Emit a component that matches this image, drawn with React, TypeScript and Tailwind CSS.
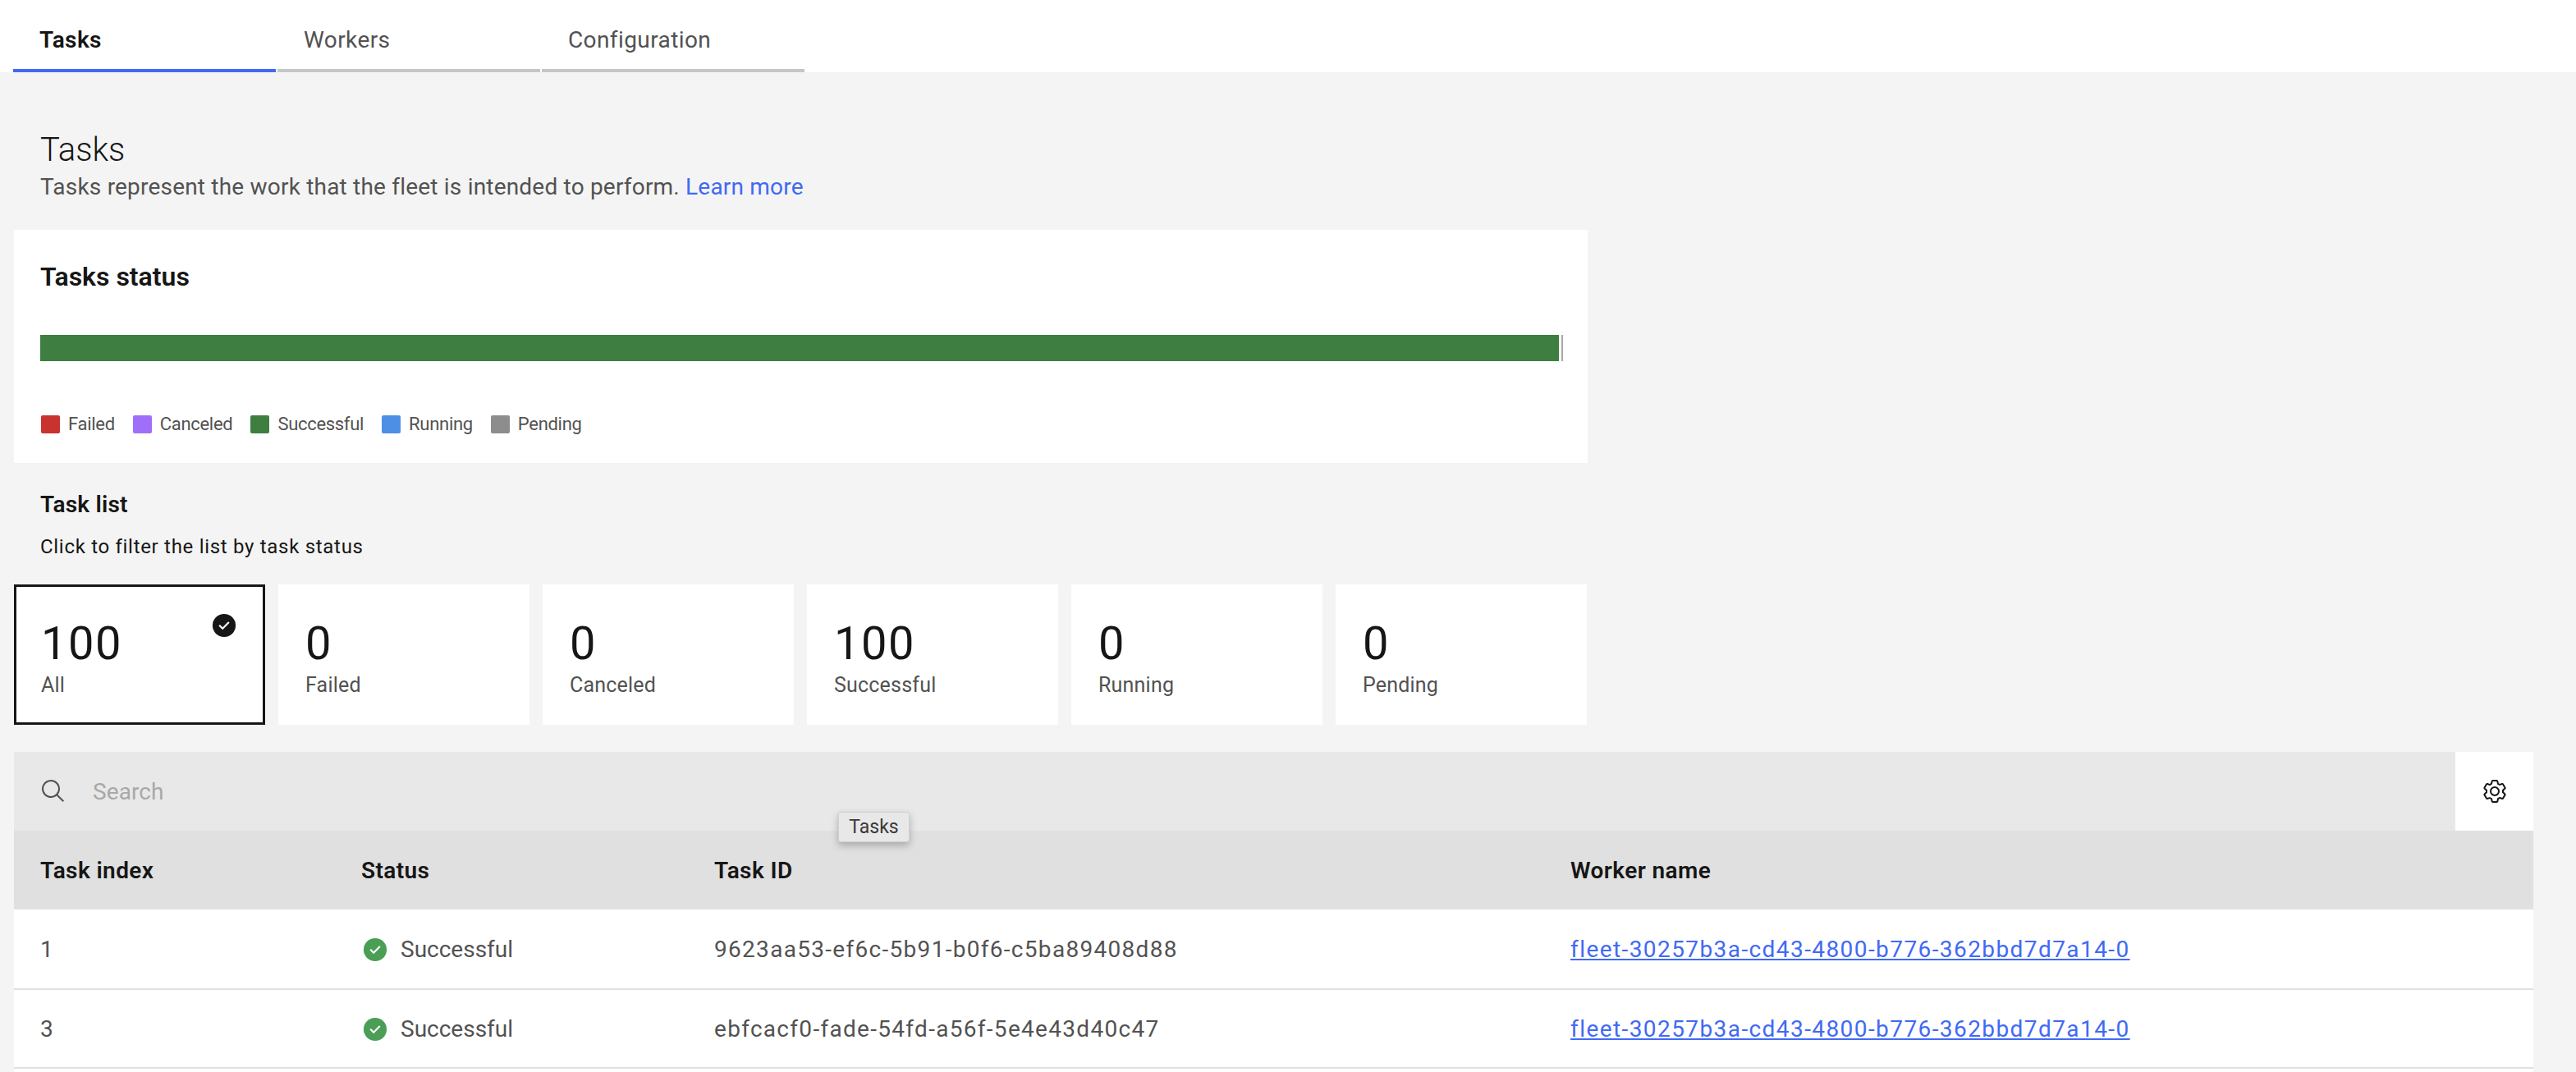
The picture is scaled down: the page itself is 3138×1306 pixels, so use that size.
import React from 'react';

const tabs = [
  { label: 'Tasks', active: true },
  { label: 'Workers', active: false },
  { label: 'Configuration', active: false },
];

const legend = [
  { label: 'Failed', swatch: 'bg-[#c8322f]' },
  { label: 'Canceled', swatch: 'bg-[#a06ffa]' },
  { label: 'Successful', swatch: 'bg-[#3e7e41]' },
  { label: 'Running', swatch: 'bg-[#4e8fe6]' },
  { label: 'Pending', swatch: 'bg-[#8d8d8d]' },
];

const tiles = [
  { count: 100, label: 'All', selected: true },
  { count: 0, label: 'Failed', selected: false },
  { count: 0, label: 'Canceled', selected: false },
  { count: 100, label: 'Successful', selected: false },
  { count: 0, label: 'Running', selected: false },
  { count: 0, label: 'Pending', selected: false },
];

const rows = [
  { index: 1, id: '9623aa53-ef6c-5b91-b0f6-c5ba89408d88' },
  { index: 3, id: 'ebfcacf0-fade-54fd-a56f-5e4e43d40c47' },
];

const workerName = 'fleet-30257b3a-cd43-4800-b776-362bbd7d7a14-0';

function CheckCircle({ color, className }: { color: string; className: string }) {
  return (
    <svg viewBox="0 0 32 32" className={className}>
      <circle cx="16" cy="16" r="15" fill={color} />
      <path d="M14 21.6l-5-5L10.6 15l3.4 3.4L21.4 11l1.6 1.6z" fill="#fff" />
    </svg>
  );
}

function SearchIcon() {
  return (
    <svg viewBox="0 0 32 32" className="w-[32px] h-[32px]" fill="#525252">
      <path d="M29 27.586l-7.552-7.552a11.018 11.018 0 1 0-1.414 1.414L27.586 29zM4 13a9 9 0 1 1 9 9 9.01 9.01 0 0 1-9-9z" />
    </svg>
  );
}

function GearIcon() {
  return (
    <svg viewBox="0 0 32 32" className="w-[32px] h-[32px]" fill="#161616">
      <path d="M27,16.76c0-.25,0-.5,0-.76s0-.51,0-.77l1.92-1.68A2,2,0,0,0,29.3,11L26.94,7a2,2,0,0,0-1.73-1,2,2,0,0,0-.64.1l-2.43.82a11.35,11.35,0,0,0-1.31-.75l-.51-2.52a2,2,0,0,0-2-1.61H13.64a2,2,0,0,0-2,1.61l-.51,2.52a11.48,11.48,0,0,0-1.32.75L7.43,6.06A2,2,0,0,0,6.79,6,2,2,0,0,0,5.06,7L2.7,11a2,2,0,0,0,.41,2.51L5,15.24c0,.25,0,.5,0,.76s0,.51,0,.77L3.11,18.45A2,2,0,0,0,2.7,21L5.06,25a2,2,0,0,0,1.73,1,2,2,0,0,0,.64-.1l2.43-.82a11.35,11.35,0,0,0,1.31.75l.51,2.52a2,2,0,0,0,2,1.61h4.72a2,2,0,0,0,2-1.61l.51-2.52a11.48,11.48,0,0,0,1.32-.75l2.42.82a2,2,0,0,0,.64.1,2,2,0,0,0,1.73-1L29.3,21a2,2,0,0,0-.41-2.51ZM25.21,24l-3.43-1.16a8.86,8.86,0,0,1-2.71,1.57L18.36,28H13.64l-.71-3.55a9.36,9.36,0,0,1-2.7-1.57L6.79,24,4.43,20l2.72-2.4a8.9,8.9,0,0,1,0-3.13L4.43,12,6.79,8l3.43,1.16a8.86,8.86,0,0,1,2.71-1.57L13.64,4h4.72l.71,3.55a9.36,9.36,0,0,1,2.7,1.57L25.21,8,27.57,12l-2.72,2.4a8.9,8.9,0,0,1,0,3.13L27.57,20Z" />
      <path d="M16,22a6,6,0,1,1,6-6A5.94,5.94,0,0,1,16,22Zm0-10a3.91,3.91,0,0,0-4,4,3.91,3.91,0,0,0,4,4,3.91,3.91,0,0,0,4-4A3.91,3.91,0,0,0,16,12Z" />
    </svg>
  );
}

export default function App() {
  return (
    <div className="h-[1306px] overflow-hidden bg-[#f4f4f4] text-[#161616] font-['Roboto',sans-serif]">
      {/* Tabs */}
      <div className="h-[88px] bg-white pl-[16px] flex gap-[2px]">
        {tabs.map((tab) => (
          <div
            key={tab.label}
            className={`w-[320px] h-[88px] pl-[32px] pt-[29px] text-[28px] leading-[40px] tracking-[0.4px] border-b-4 ${
              tab.active ? 'border-[#4169f5] font-semibold text-[#161616]' : 'border-[#c6c6c6] text-[#525252]'
            }`}
          >
            {tab.label}
          </div>
        ))}
      </div>

      <div className="pl-[17px] pr-[52px]">
        {/* Page heading */}
        <div className="pl-[32px] pt-[71px]">
          <h1 className="text-[40px] leading-[48px] font-light">Tasks</h1>
          <p className="mt-[1px] text-[28px] leading-[40px] tracking-[0.2px] text-[#525252]">
            Tasks represent the work that the fleet is intended to perform.{' '}
            <a className="text-[#4169f5]">Learn more</a>
          </p>
        </div>

        {/* Status card */}
        <div className="mt-[32px] w-[1917px] h-[284px] bg-white pl-[32px] pt-[37px]">
          <h2 className="text-[32px] leading-[40px] font-semibold">Tasks status</h2>
          <div className="mt-[51px] flex gap-[3px] h-[32px]">
            <div className="w-[1850px] bg-[#3e7e41]" />
            <div className="w-[2px] bg-[#a8a8a8]" />
          </div>
          <div className="mt-[61px] flex gap-[21px] h-[32px] text-[22px] leading-[32px] tracking-[-0.3px] text-[#525252]">
            {legend.map((item) => (
              <div key={item.label} className="flex items-center gap-[10px] ml-[1px]">
                <span className={`w-[23px] h-[22px] rounded-[2px] ${item.swatch}`} />
                <span>{item.label}</span>
              </div>
            ))}
          </div>
        </div>

        {/* Task list */}
        <div className="pl-[32px] mt-[33px]">
          <h2 className="text-[28px] leading-[36px] tracking-[0.2px] font-semibold">Task list</h2>
          <p className="mt-[17px] text-[24px] leading-[32px] tracking-[0.7px]">Click to filter the list by task status</p>
        </div>

        <div className="mt-[30px] w-[1916px] grid grid-cols-6 gap-[16px]">
          {tiles.map((tile) => (
            <div
              key={tile.label}
              className={`relative h-[171px] bg-white ${
                tile.selected ? 'border-[3px] border-[#161616] pl-[30px] pt-[35px]' : 'pl-[33px] pt-[38px]'
              }`}
            >
              <div className="text-[56px] leading-[68px] tracking-[1.5px]">{tile.count}</div>
              <div className="mt-[1px] text-[25px] leading-[32px] tracking-[0.2px] text-[#525252]">{tile.label}</div>
              {tile.selected && (
                <CheckCircle color="#161616" className="absolute top-[32px] right-[32px] w-[30px] h-[30px]" />
              )}
            </div>
          ))}
        </div>

        {/* Table */}
        <div className="relative mt-[33px]">
          <div className="flex h-[96px]">
            <div className="flex-1 bg-[#e8e8e8] flex items-center pl-[32px] gap-[32px]">
              <SearchIcon />
              <span className="pt-[2px] text-[28px] tracking-[0.1px] text-[#a8a8a8]">Search</span>
            </div>
            <div className="w-[95px] bg-white flex items-center justify-center">
              <GearIcon />
            </div>
          </div>

          <table className="w-full table-fixed border-separate border-spacing-0 text-[28px]">
            <colgroup>
              <col className="w-[391px]" />
              <col className="w-[430px]" />
              <col className="w-[1043px]" />
              <col />
            </colgroup>
            <thead>
              <tr className="h-[96px] bg-[#e0e0e0] text-left">
                {['Task index', 'Status', 'Task ID', 'Worker name'].map((heading) => (
                  <th key={heading} className="pl-[32px] pt-[2px] font-semibold tracking-[0.4px]">
                    {heading}
                  </th>
                ))}
              </tr>
            </thead>
            <tbody className="bg-white text-[#525252]">
              {rows.map((row, i) => (
                <tr key={row.index} className={i === 0 ? 'h-[98px]' : 'h-[96px]'}>
                  <td className="pl-[32px] pt-[2px] border-b-2 border-[#e0e0e0]">{row.index}</td>
                  <td className="pl-[32px] pt-[2px] border-b-2 border-[#e0e0e0]">
                    <div className="flex items-center gap-[16px] pl-[2px]">
                      <CheckCircle color="#4b9e55" className="w-[30px] h-[30px]" />
                      <span>Successful</span>
                    </div>
                  </td>
                  <td className="pl-[32px] pt-[2px] tracking-[1.3px] border-b-2 border-[#e0e0e0]">{row.id}</td>
                  <td className="pl-[32px] pt-[2px] border-b-2 border-[#e0e0e0]">
                    <a className="text-[#4169f5] tracking-[1.42px] underline">{workerName}</a>
                  </td>
                </tr>
              ))}
              <tr className="h-[96px]">
                <td colSpan={4} />
              </tr>
            </tbody>
          </table>

          {/* Tooltip */}
          <div className="absolute left-[1004px] top-[73px] w-[87px] h-[37px] pt-[2px] flex items-center justify-center bg-[#e8e8e8] border border-[#d0d0d0] rounded-[3px] shadow-[0_4px_10px_rgba(0,0,0,0.25)] text-[23px] text-[#393939]">
            Tasks
          </div>
        </div>
      </div>
    </div>
  );
}
